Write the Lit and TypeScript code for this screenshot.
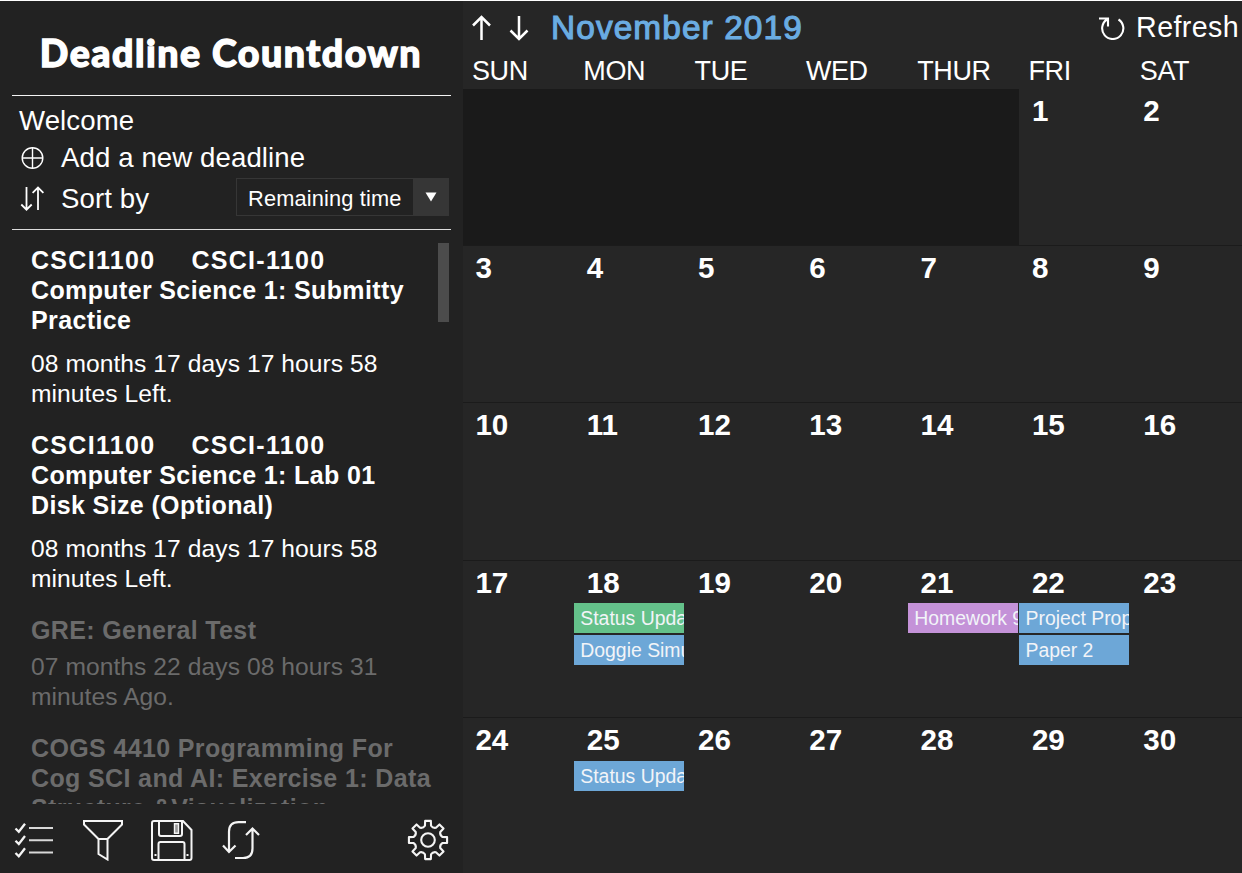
import { LitElement, html, css, svg, nothing } from "lit";
import { customElement } from "lit/decorators.js";

interface CalendarEvent { title: string; tone: "green" | "blue" | "purple"; }
interface Deadline { code?: string; lines: string[]; left: string; past?: boolean; }

const DAYS = ["SUN", "MON", "TUE", "WED", "THUR", "FRI", "SAT"];

const EVENTS: Record<number, CalendarEvent[]> = {
  18: [{ title: "Status Update", tone: "green" }, { title: "Doggie Simulator", tone: "blue" }],
  21: [{ title: "Homework 9", tone: "purple" }],
  22: [{ title: "Project Proposal", tone: "blue" }, { title: "Paper 2", tone: "blue" }],
  25: [{ title: "Status Update", tone: "blue" }],
};

const DEADLINES: Deadline[] = [
  { code: "CSCI1100", lines: ["CSCI-1100", "Computer Science 1: Submitty", "Practice"], left: "08 months 17 days 17 hours 58 minutes Left." },
  { code: "CSCI1100", lines: ["CSCI-1100", "Computer Science 1: Lab 01", "Disk Size (Optional)"], left: "08 months 17 days 17 hours 58 minutes Left." },
  { lines: ["GRE: General Test"], left: "07 months 22 days 08 hours 31 minutes Ago.", past: true },
  { lines: ["COGS 4410 Programming For", "Cog SCI and AI: Exercise 1: Data", "Structure &Visualization"], left: "", past: true },
];

const icon = (w: number, h: number, sw: number, body: unknown) => html`
  <svg width=${w} height=${h} viewBox="0 0 ${w} ${h}" fill="none" stroke="currentColor" stroke-width=${sw}>${body}</svg>`;

const gearPath = (): string => {
  const pts: string[] = [];
  for (let i = 0; i < 8; i++) {
    const a = (i * Math.PI) / 4 - Math.PI / 2;
    const at = (r: number, d: number) => `${(21 + r * Math.cos(a + d)).toFixed(2)} ${(21 + r * Math.sin(a + d)).toFixed(2)}`;
    pts.push(`${i ? "L" : "M"}${at(14.6, -0.21)}L${at(19.3, -0.15)}L${at(19.3, 0.15)}L${at(14.6, 0.21)}`);
    pts.push(`Q${at(12.6, Math.PI / 8)} ${at(14.6, Math.PI / 4 - 0.21)}`);
  }
  return pts.join("") + "Z";
};

@customElement("side-panel")
class SidePanel extends LitElement {
  static styles = css`
    :host { display: flex; flex-direction: column; height: 100%; min-width: 0; background: #222; overflow: hidden; }
    svg { display: block; flex: none; }
    h1 { margin: 0 12px; height: 95px; box-sizing: border-box; border-bottom: 1px solid #f4f4f4; padding-right: 1px;
      font: 900 37.5px/103px Lato, sans-serif; text-align: center; letter-spacing: 1.5px; white-space: nowrap; overflow: hidden;
      -webkit-text-stroke: 1.3px #fff; }
    .menu { margin: 0 12px; height: 134px; box-sizing: border-box; border-bottom: 1px solid #dcdcdc; padding: 5px 2px 0 7px; font-size: 27.6px; letter-spacing: 0.1px; }
    .line { display: flex; align-items: center; height: 38px; white-space: nowrap; }
    .welcome { padding-top: 2px; box-sizing: border-box; }
    .line svg { margin-right: 16px; }
    .sort { height: 44px; }
    .select { display: flex; margin-left: auto; width: 213px; height: 38px; margin-top: -4px; box-sizing: border-box; border: 1px solid #363636;
      font-size: 21.8px; line-height: 39px; letter-spacing: 0.15px; }
    .value { flex: 1; padding-left: 11px; }
    .arrow { width: 35px; background: #363636; display: grid; place-items: center; }
    .arrow svg { margin: 0; }
    .list { flex: 1; min-height: 0; overflow: hidden; display: flex; padding: 13px 14px 0 31px; }
    .items { flex: 1; min-width: 0; padding-top: 2px; }
    .thumb { flex: none; width: 11px; height: 79px; background: #4c4c4c; }
    .item { font-size: 24.6px; line-height: 30px; margin-bottom: 21px; }
    .name { font-weight: 700; letter-spacing: 0.37px; font-size: 25px; white-space: nowrap; }
    .row { display: flex; gap: 37px; }
    .coded { letter-spacing: 1.3px; gap: 36px; }
    .left { margin-top: 14px; width: 370px; letter-spacing: 0.07px; }
    .past { color: #6b6b6b; }
    .past .left { margin-top: 6.5px; }
    .bar { flex: none; height: 69px; display: flex; align-items: center; padding: 2px 14px 0 14px; box-sizing: border-box; color: #f4f4f4; }
    .gear { margin-left: auto; }
    .i2 { margin-left: 28px; } .i3 { margin-left: 26px; } .i4 { margin-left: 28px; }
  `;
  render() {
    return html`
      <h1>Deadline Countdown</h1>
      <div class="menu">
        <div class="line welcome">Welcome</div>
        <div class="line">${icon(26, 26, 1.4, svg`<circle cx="13.5" cy="13" r="10.3"/><path d="M13.5 2.7v20.6M3.2 13h20.6"/>`)}Add a new deadline</div>
        <div class="line sort">${icon(26, 28, 1.8, svg`<path d="M7.5 2v22.5M2.3 19.5l5.2 5.2 5.2-5.2M19 25V2.5M13.6 7.8L19 2.5l5.4 5.3"/>`)}Sort by
          <div class="select"><span class="value">Remaining time</span>
            <span class="arrow">${icon(12, 10, 0, svg`<path d="M.5 .5h11L6 9.5z" fill="currentColor"/>`)}</span></div>
        </div>
      </div>
      <div class="list">
        <div class="items">${DEADLINES.map((d) => html`
          <div class="item ${d.past ? "past" : ""}">
            <div class="name">${d.lines.map((l, i) => d.code && i === 0
              ? html`<div class="row coded"><span>${d.code}</span><span>${l}</span></div>`
              : html`<div class="row">${l}</div>`)}</div>
            ${d.left ? html`<div class="left">${d.left}</div>` : nothing}
          </div>`)}</div>
        <div class="thumb"></div>
      </div>
      <div class="bar">
        ${icon(40, 42, 2, svg`<path d="M15 9h24M15 21.2h24M15 33.5h24" stroke="#d8d8d8"/><path d="M1.5 9.5l3.3 3.3L11 4.8M1.5 21.7l3.3 3.3 6.2-8M1.5 34l3.3 3.3 6.2-8" stroke-width="2.3"/>`)}
        <div class="i2">${icon(42, 42, 2, svg`<path d="M2 2h38v3.5L25.5 20v20.5L16.5 35V20L2 5.5zM16.5 20h9"/>`)}</div>
        <div class="i3">${icon(44, 42, 2, svg`<path d="M4 2h29l8.5 9v28q0 2-2 2H4q-2 0-2-2V4q0-2 2-2zM9 2v13q0 2 2 2h19q2 0 2-2V2M8.5 41V25q0-2 2-2h22q2 0 2 2v16"/><path d="M24.5 4.8h4v9.5h-4z" stroke-width="1.4" fill="#999"/><path d="M4.5 36h2M36.5 36h2"/>`)}</div>
        <div class="i4">${icon(40, 42, 2.2, svg`<path d="M24 3.2h-7.500q-9.500 0-9.500 9.500v20M1 26.500l6 6.500 6.500-6.500M13 39h8q9.500 0 9.500-9.500V10M24 16l6.500-6.500 6.500 6.500"/>`)}</div>
        <div class="gear">${icon(42, 42, 2.1, svg`<path d=${gearPath()} stroke-linejoin="round"/><circle cx="21" cy="21" r="6.8"/>`)}</div>
      </div>`;
  }
}

@customElement("month-view")
class MonthView extends LitElement {
  static styles = css`
    :host { display: flex; flex-direction: column; height: 100%; min-width: 0; background: #262626; overflow: hidden; }
    svg { display: block; }
    .head { flex: none; height: 53px; display: flex; align-items: center; padding: 0 3px 0 8px; box-sizing: border-box; white-space: nowrap; }
    .nav { margin-right: 16px; }
    .month { color: #6aace2; font-size: 33.4px; letter-spacing: 1.1px; -webkit-text-stroke: 1.1px #6aace2; margin-left: 4px; }
    .refresh { margin-left: auto; display: flex; align-items: center; gap: 11px; font-size: 28.6px; letter-spacing: 0.4px; }
    .week { flex: none; display: grid; grid-template-columns: repeat(7, 111.3px); height: 34.5px; font-size: 27px; line-height: 34px; letter-spacing: -0.4px; }
    .week span { padding-left: 9px; }
    .grid { flex: 1; min-height: 0; display: grid; grid-template-columns: repeat(7, 111.3px); grid-template-rows: repeat(5, 157.4px); }
    .cell { border-bottom: 1px solid #1b1b1b; box-sizing: border-box; min-width: 0; overflow: hidden; }
    .blank { grid-column: span 5; background: #1a1a1a; }
    .num { font-weight: 700; font-size: 29.6px; line-height: 32px; padding: 6px 0 0 12.4px; height: 42.7px; box-sizing: border-box; }
    .event { height: 30px; width: 110px; margin-bottom: 1.3px; overflow: hidden; white-space: nowrap; padding-left: 6px; box-sizing: border-box;
      font-size: 19.4px; line-height: 30px; color: #f2f4f8; }
    .green { background: #64c18a; } .blue { background: #6da7d7; } .purple { background: #c492d8; }
  `;
  render() {
    return html`
      <div class="head">
        <div class="nav">${icon(22, 28, 2.5, svg`<path d="M10.5 26V3M2 11.5L10.5 3l8.5 8.5"/>`)}</div>
        <div class="nav">${icon(22, 28, 2.5, svg`<path d="M10 2v23M1.5 16.5l8.5 8.5 8.5-8.5"/>`)}</div>
        <div class="month">November 2019</div>
        <div class="refresh">${icon(26, 24, 2.1, svg`<path d="M0 2.5h9v8M8 3.5A10.6 10.6 0 1 0 19.500 3.500"/>`)}<span>Refresh</span></div>
      </div>
      <div class="week">${DAYS.map((d) => html`<span>${d}</span>`)}</div>
      <div class="grid">
        <div class="cell blank"></div>
        ${Array.from({ length: 30 }, (_, i) => i + 1).map((n) => html`
          <div class="cell"><div class="num">${n}</div>
            ${(EVENTS[n] ?? []).map((e) => html`<div class="event ${e.tone}">${e.title}</div>`)}</div>`)}
      </div>`;
  }
}

@customElement("app-root")
class AppRoot extends LitElement {
  static styles = css`
    :host { display: grid; grid-template-columns: 463px 779px; width: 1242px; height: 873px; box-sizing: border-box; overflow: hidden;
      border-top: 1px solid #fff; background: #222; color: #fff; font-family: "Liberation Sans", Arial, sans-serif; }
  `;
  render() {
    return html`<side-panel></side-panel><month-view></month-view>`;
  }
}
